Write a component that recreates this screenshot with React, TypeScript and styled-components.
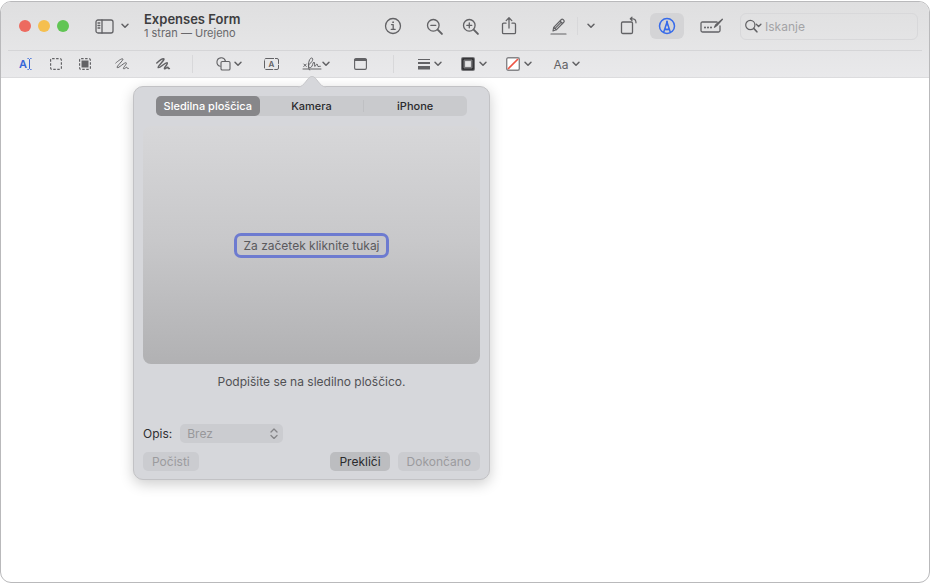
import React, { useState } from "react";
import styled, { createGlobalStyle, css } from "styled-components";

const GlobalStyle = createGlobalStyle`
  *, *::before, *::after { box-sizing: border-box; }
  body {
    margin: 0;
    background: #fff;
    font-family: Inter, "Liberation Sans", sans-serif;
  }
  button, input, select { font-family: inherit; margin: 0; }
`;

const Page = styled.div`
  display: flex;
  min-height: 100vh;
  padding: 1px 1px 2px 0;
`;

const Window = styled.main`
  flex: 1;
  display: flex;
  flex-direction: column;
  min-width: 0;
  border: 1px solid #b9b9bb;
  border-radius: 11px;
  background: #fff;
`;

const Header = styled.header`
  border-radius: 10px 10px 0 0;
  border-bottom: 1px solid #dcdcde;
  background: linear-gradient(#dfdfe0, #e3e3e4 40%, #e9e9eb);
`;

const TitleBar = styled.div`
  display: flex;
  align-items: center;
  height: 48px;
  padding: 0 11px 0 18px;
`;

const MarkupBar = styled.div`
  display: flex;
  align-items: center;
  height: 27px;
  margin: 0 7px;
  padding-left: 11px;
  border-top: 1px solid #d5d5d7;
`;

const Lights = styled.div`
  display: flex;
  gap: 7px;
`;

const Light = styled.button<{ $color: string }>`
  width: 12px;
  height: 12px;
  padding: 0;
  border: 0;
  border-radius: 50%;
  background: ${(p) => p.$color};
`;

const Tool = styled.button<{ $w?: number; $gap?: number; $active?: boolean }>`
  flex: none;
  display: flex;
  align-items: center;
  justify-content: center;
  width: ${(p) => p.$w ?? 16}px;
  height: 26px;
  margin: 0 0 0 ${(p) => p.$gap ?? 0}px;
  padding: 0;
  border: 0;
  border-radius: 6px;
  background: ${(p) => (p.$active ? "#d4d4d6" : "transparent")};
  color: #626265;
  font-size: 12px;
  svg { display: block; flex: none; overflow: visible; }
`;

const Divider = styled.span<{ $gap: number }>`
  flex: none;
  width: 1px;
  height: 18px;
  margin-left: ${(p) => p.$gap}px;
  background: #d8d8da;
`;

const Titles = styled.div`
  flex: 1;
  min-width: 0;
  margin-left: 15px;
  white-space: nowrap;
`;

const Title = styled.h1`
  margin: 0;
  font-size: 13px;
  line-height: 15px;
  font-weight: 600;
  color: #3d3d3f;
`;

const Subtitle = styled.p`
  margin: 0;
  font-size: 11px;
  line-height: 13px;
  color: #68686b;
`;

const Search = styled.label`
  flex: none;
  display: flex;
  align-items: center;
  width: 178px;
  height: 27px;
  margin-left: 16px;
  padding-left: 4px;
  border: 1px solid #d8d8da;
  border-radius: 6px;
  color: #626265;
  svg { flex: none; }
`;

const SearchInput = styled.input`
  flex: 1;
  min-width: 0;
  margin-left: 3px;
  padding: 1px 0 0;
  border: 0;
  outline: 0;
  background: none;
  font-size: 12px;
  color: #3d3d3f;
  &::placeholder { color: #a4a4a7; opacity: 1; }
`;

const Anchor = styled.div`
  position: relative;
  margin-left: 24px;
`;

const Popover = styled.section`
  position: absolute;
  z-index: 1;
  top: 35px;
  left: 50%;
  width: 357px;
  margin-left: -179px;
  padding: 9px 9px 8px;
  border: 1px solid #c2c2c5;
  border-radius: 10px;
  background: #d6d7db;
  box-shadow: 0 4px 14px rgba(0, 0, 0, 0.2);
`;

const Arrow = styled.svg`
  position: absolute;
  bottom: 100%;
  left: 50%;
  width: 28px;
  height: 12px;
  margin: 0 0 -1px -14px;
`;

const Segments = styled.div`
  display: flex;
  height: 20px;
  margin: 0 13px;
  border-radius: 5px;
  background: #c9cacd;
`;

const Segment = styled.button<{ $on: boolean; $rule?: boolean }>`
  flex: 1 1 0;
  padding: 0;
  border: 0;
  border-radius: 5px;
  background: none;
  font-size: 11px;
  font-weight: 500;
  line-height: 20px;
  white-space: nowrap;
  color: #2b2b2d;
  ${(p) =>
    p.$rule &&
    css`
      border-radius: 0;
      background: linear-gradient(#bfc0c3, #bfc0c3) left center / 1px 12px no-repeat;
    `}
  ${(p) =>
    p.$on &&
    css`
      border-radius: 5px;
      background: #87878a;
      color: #fff;
    `}
`;

const Pad = styled.div`
  display: flex;
  align-items: center;
  justify-content: center;
  height: 238px;
  margin-top: 10px;
  border-radius: 8px;
  background: linear-gradient(#d7d7d9, #c8c8ca 48%, #b1b1b3);
`;

const StartButton = styled.button`
  height: 25px;
  padding: 0 6px;
  border: 3px solid #6d7bd0;
  border-radius: 7px;
  background: #c6c6c9;
  font-size: 12px;
  color: #5a5a5d;
`;

const Hint = styled.p`
  margin: 9px 0 33px;
  font-size: 12px;
  line-height: 18px;
  text-align: center;
  color: #515154;
`;

const Field = styled.div`
  display: flex;
  align-items: center;
  gap: 8px;
  font-size: 12px;
  color: #2f2f31;
`;

const SelectWrap = styled.span`
  position: relative;
  display: flex;
  svg {
    position: absolute;
    right: 5px;
    top: 4px;
    pointer-events: none;
  }
`;

const Select = styled.select`
  appearance: none;
  width: 103px;
  height: 19px;
  padding: 0 18px 0 7px;
  border: 0;
  border-radius: 5px;
  background: #cbccd0;
  font-size: 12px;
  color: #98989b;
  opacity: 1;
`;

const Actions = styled.div`
  display: flex;
  gap: 8px;
  margin-top: 9px;
`;

const Action = styled.button<{ $first?: boolean }>`
  height: 19px;
  padding: 0 9px;
  border: 0;
  border-radius: 5px;
  background: #bcbdc0;
  font-size: 12px;
  line-height: 18px;
  color: #2b2b2d;
  ${(p) => p.$first && "margin-right: auto;"}
  &:disabled { background: #cbccd0; color: #9b9b9e; }
`;

type IconProps = { w: number; h?: number; sw?: number; children: React.ReactNode };
const Icon = ({ w, h = w, sw = 1.3, children }: IconProps) => (
  <svg width={w} height={h} viewBox={`0 0 ${w} ${h}`} fill="none" stroke="currentColor"
    strokeWidth={sw} strokeLinecap="round" strokeLinejoin="round" aria-hidden="true">
    {children}
  </svg>
);

const Chevron = () => (
  <Icon w={8} h={6} sw={1.5}><path d="M1 1.2 4 4.3 7 1.2" /></Icon>
);

const Menu = ({ gap, label }: { gap: number; label: string }) => (
  <Tool $w={8} $gap={gap} aria-label={label}><Chevron /></Tool>
);

const scribble = "M.8 5C3 3 6.500 .3 7.800 .9 9.200 1.800 1 8.500 2.200 9.600 3.500 10.600 9.800 3.800 11.200 4.800 12.400 5.800 7.600 9.800 8.500 10.700 9.400 11.500 11.200 8.600 12 9.300 12.400 9.800 11.800 10.900 13.400 10.500";

const tabs = ["Sledilna ploščica", "Kamera", "iPhone"];

function SignaturePopover() {
  const [tab, setTab] = useState(0);
  return (
    <Popover aria-label="Podpis">
      <Arrow viewBox="0 0 28 12" aria-hidden="true">
        <path d="M0 12V11C7 11 9 0 14 0S21 11 28 11v1Z" fill="#d6d7db" />
        <path d="M0 11C7 11 9 .5 14 .5S21 11 28 11" fill="none" stroke="#c8c8cb" strokeWidth="1" />
      </Arrow>
      <Segments role="tablist">
        {tabs.map((name, i) => (
          <Segment key={name} role="tab" aria-selected={tab === i} $on={tab === i}
            $rule={i > 0 && tab !== i - 1} onClick={() => setTab(i)}>{name}</Segment>
        ))}
      </Segments>
      <Pad><StartButton>Za začetek kliknite tukaj</StartButton></Pad>
      <Hint>Podpišite se na sledilno ploščico.</Hint>
      <Field>
        <label htmlFor="description">Opis:</label>
        <SelectWrap>
          <Select id="description" disabled><option>Brez</option></Select>
          <Icon w={8} h={11}><path d="M1 4 4 1 7 4M1 7.5l3 3 3-3" stroke="#858588" /></Icon>
        </SelectWrap>
      </Field>
      <Actions>
        <Action $first disabled>Počisti</Action>
        <Action>Prekliči</Action>
        <Action disabled>Dokončano</Action>
      </Actions>
    </Popover>
  );
}

export default function App() {
  return (
    <Page>
      <GlobalStyle />
      <Window>
        <Header>
          <TitleBar>
            <Lights>
              <Light $color="#ed6a5f" aria-label="Zapri" />
              <Light $color="#f5bf4f" aria-label="Pomanjšaj" />
              <Light $color="#61c554" aria-label="Povečaj" />
            </Lights>
            <Tool $w={20} $gap={25} aria-label="Stranska vrstica">
              <Icon w={19} h={15}>
                <rect x="1" y="1" width="17" height="13" rx="2" />
                <path d="M7 1v13M3 4h1.8M3 6.5h1.8M3 9h1.8" />
              </Icon>
            </Tool>
            <Menu gap={7} label="Meni stranske vrstice" />
            <Titles>
              <Title>Expenses Form</Title>
              <Subtitle>1 stran — Urejeno</Subtitle>
            </Titles>
            <Tool $w={20} aria-label="Informacije">
              <Icon w={18}>
                <circle cx="9" cy="9" r="7.5" />
                <path d="M7.5 7.6h1.7v4.6M7.2 12.3h4" />
                <circle cx="9" cy="5.2" r=".5" fill="currentColor" strokeWidth=".8" />
              </Icon>
            </Tool>
            <Tool $w={20} $gap={21} aria-label="Zmanjšaj prikaz">
              <Icon w={17}>
                <circle cx="7.3" cy="7.3" r="5.8" /><path d="M4.8 7.3h5" />
                <path d="m11.9 11.9 4 4" strokeWidth="2" />
              </Icon>
            </Tool>
            <Tool $w={20} $gap={16} aria-label="Povečaj prikaz">
              <Icon w={17}>
                <circle cx="7.3" cy="7.3" r="5.8" /><path d="M4.8 7.3h5M7.3 4.8v5" />
                <path d="m11.9 11.9 4 4" strokeWidth="2" />
              </Icon>
            </Tool>
            <Tool $w={20} $gap={19} aria-label="Deli">
              <Icon w={16} h={18}>
                <path d="M5 6.2H2.7a1.2 1.2 0 0 0-1.2 1.2v8.1a1.2 1.2 0 0 0 1.2 1.2h10.6a1.2 1.2 0 0 0 1.2-1.2V7.4a1.2 1.2 0 0 0-1.2-1.2H11M8 11V.9M5.2 3.6 8 .8l2.8 2.8" />
              </Icon>
            </Tool>
            <Tool $w={20} $gap={29} aria-label="Označi">
              <Icon w={17} h={17} sw={1.2}>
                <path d="m3 13 .7-3.7 7.7-7.8q.8-.7 1.6 0l.9.9q.7.8 0 1.6L6.3 11.8ZM3.7 9.3l2.6 2.5M10 3l2.7 2.6M5.6 9.9l5.2-5.2M1 16h15" />
              </Icon>
            </Tool>
            <Divider $gap={9} />
            <Menu gap={9} label="Barva označevanja" />
            <Tool $w={20} $gap={23} aria-label="Zavrti">
              <Icon w={17} h={18}>
                <rect x="1.5" y="5" width="11" height="11.5" rx="1.3" />
                <path d="M10.5 1.8H13q3 .3 3 4M12 .2l-1.7 1.6L12 3.5" strokeWidth="1.2" />
              </Icon>
            </Tool>
            <Tool $w={34} $gap={12} $active aria-label="Oznake">
              <Icon w={18} sw={1.5}>
                <g stroke="#376bea">
                  <circle cx="9" cy="9" r="7.5" />
                  <path d="M5.7 15.3 9 5l3.3 10.3M6.5 13.3 8 12l1 .8 1-.8 1.5 1.3" />
                  <path d="M9 4.5v3.2" strokeWidth="1.8" />
                </g>
              </Icon>
            </Tool>
            <Tool $w={24} $gap={16} aria-label="Izpolnjevanje obrazcev">
              <Icon w={24} h={16}>
                <path d="M17 4H2.5Q1 4 1 5.5v7Q1 14 2.5 14h16q1.5 0 1.5-1.5V8M22.4 1.3l-5.6 6.2-2.3 1.7 1.3-2.5Z" />
                <path d="M5 9.5h0M8 9.5h0M11 9.5h0" strokeWidth="2" />
              </Icon>
            </Tool>
            <Search>
              <Icon w={17} h={14} sw={1.2}>
                <circle cx="5.3" cy="6" r="4.6" /><path d="m8.7 9.4 3.2 3.4" strokeWidth="1.6" />
                <path d="m11.3 5.2 2.3 2.2 2.3-2.2" strokeWidth="1.4" />
              </Icon>
              <SearchInput type="search" aria-label="Iskanje" placeholder="Iskanje" />
            </Search>
          </TitleBar>

          <MarkupBar>
            <Tool $w={14} aria-label="Izbira besedila">
              <svg width="14" height="14" viewBox="0 0 14 14" aria-hidden="true">
                <text x="0" y="11" fontSize="11" fontWeight="600" fill="#3566d8">A</text>
                <path d="M8.5 1.5h1l1 1 1-1h1M10.5 2.5v9M8.5 12.5h1l1-1 1 1h1" fill="none" stroke="#3566d8" />
              </svg>
            </Tool>
            <Tool $gap={15} aria-label="Pravokotna izbira">
              <Icon w={12} sw={1.2}><rect x=".6" y=".6" width="10.8" height="10.8" rx="1.5" strokeDasharray="2.5 1.5" strokeLinecap="butt" /></Icon>
            </Tool>
            <Tool $gap={13} aria-label="Izbira predmeta">
              <Icon w={12} sw={1.2}>
                <rect x=".6" y=".6" width="10.8" height="10.8" rx="1.5" strokeDasharray="2.5 1.5" strokeLinecap="butt" />
                <rect x="2.5" y="2.5" width="7" height="7" fill="currentColor" stroke="none" />
              </Icon>
            </Tool>
            <Tool $gap={21} aria-label="Skica"><Icon w={14} h={12} sw={1}><path d={scribble} /></Icon></Tool>
            <Tool $gap={25} aria-label="Risanje"><Icon w={14} h={12} sw={1.5}><path d={scribble} /></Icon></Tool>
            <Divider $gap={21} />
            <Tool $gap={22} aria-label="Oblike">
              <Icon w={15} h={14} sw={1.1}>
                <path d="M4.2 9.3A4.3 4.3 0 1 1 9.4 4" />
                <rect x="5" y="4.5" width="9" height="8.5" rx="1.3" />
              </Icon>
            </Tool>
            <Menu gap={3} label="Meni oblik" />
            <Tool $gap={21} aria-label="Besedilo">
              <svg width="15" height="12" viewBox="0 0 15 12" fill="none" stroke="currentColor" aria-hidden="true">
                <rect x=".5" y=".5" width="14" height="11" rx="1.5" strokeDasharray="8 1" />
                <text x="7.5" y="9" fontSize="8" fontWeight="600" textAnchor="middle" fill="currentColor" stroke="none">A</text>
              </svg>
            </Tool>
            <Anchor>
              <Tool $w={18} aria-label="Podpis" aria-haspopup="dialog" aria-expanded="true">
                <Icon w={18} h={14} sw={1}>
                  <path d="m.8 7 2.5 2.5M3.3 7 .8 9.500M0 12h18M6.500 13C4 10 6 1 8.500 1c2 0 1.500 3-1 5-3 2.500-2 5 0 4.500C10 10 9.500 5 11 5c1.300 0 0 4.500.8 4.500S13 7 14 7s.2 2.500 1 2.500 1.500-.2 2.300-.2" />
                </Icon>
              </Tool>
              <SignaturePopover />
            </Anchor>
            <Menu gap={1} label="Meni podpisov" />
            <Tool $gap={22} aria-label="Opomba">
              <Icon w={13} h={12} sw={1.1}>
                <rect x=".6" y=".6" width="11.8" height="10.8" rx="1.3" />
                <path d="M1 2h11" strokeWidth="2.2" />
              </Icon>
            </Tool>
            <Divider $gap={25} />
            <Tool $gap={22} aria-label="Slog črte">
              <svg width="12" height="11" viewBox="0 0 12 11" fill="currentColor" aria-hidden="true">
                <path d="M0 0h12v1H0zM0 3h12v2H0zM0 7h12v3.5H0z" />
              </svg>
            </Tool>
            <Menu gap={2} label="Meni slogov črte" />
            <Tool $gap={18} aria-label="Barva obrobe">
              <svg width="14" height="14" viewBox="0 0 14 14" fill="none" aria-hidden="true">
                <rect width="14" height="14" rx="2" fill="#77777a" />
                <rect x="2" y="2" width="10" height="10" fill="#e4e4e5" stroke="#222224" strokeWidth="1.5" />
                <rect x="3.5" y="3.5" width="7" height="7" stroke="#77777a" strokeWidth="1.2" />
              </svg>
            </Tool>
            <Menu gap={3} label="Meni barv obrobe" />
            <Tool $gap={18} aria-label="Barva polnila">
              <svg width="14" height="14" viewBox="0 0 14 14" aria-hidden="true">
                <rect x=".7" y=".7" width="12.6" height="12.6" rx="1.5" fill="#fff" stroke="#858588" strokeWidth="1.4" />
                <path d="M2 12 12 2" stroke="#ee5545" strokeWidth="1.7" />
              </svg>
            </Tool>
            <Menu gap={3} label="Meni barv polnila" />
            <Tool $gap={21} aria-label="Slog besedila">Aa</Tool>
            <Menu gap={3} label="Meni slogov besedila" />
          </MarkupBar>
        </Header>
      </Window>
    </Page>
  );
}
